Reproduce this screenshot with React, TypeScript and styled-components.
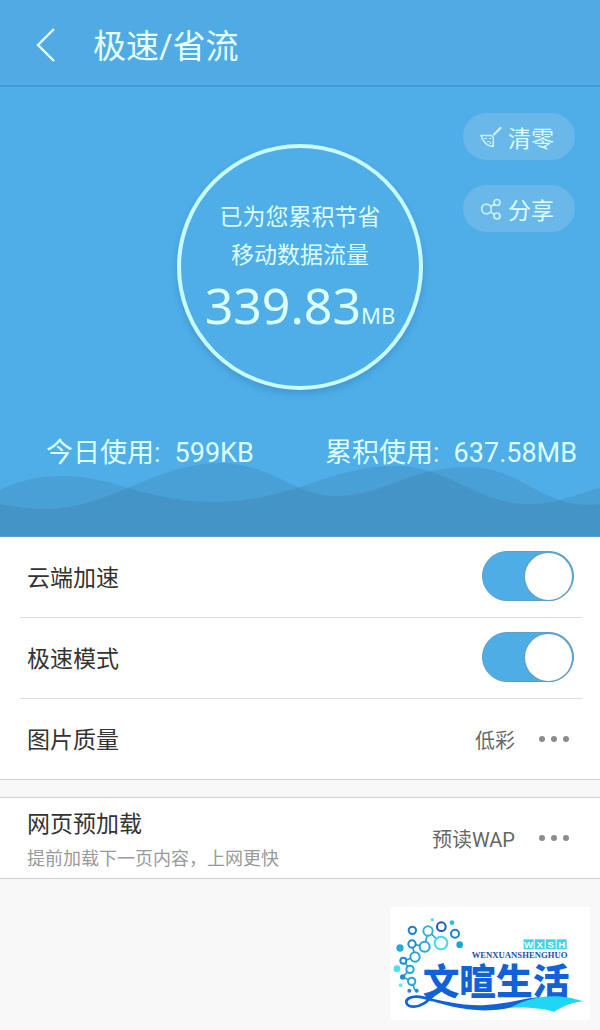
import React, { useState } from 'react';
import styled, { createGlobalStyle } from 'styled-components';

const GlobalStyle = createGlobalStyle`
  * {
    box-sizing: border-box;
  }
  body {
    margin: 0;
    background: #f8f8f8;
    color: #333;
    font-family: Roboto, 'Noto Sans CJK SC', sans-serif;
  }
  button {
    font-family: inherit;
    border: 0;
    padding: 0;
    background: none;
    color: inherit;
    cursor: pointer;
  }
`;

const BackIcon = () => (
  <svg width="20" height="36" viewBox="0 0 20 36" fill="none" stroke="currentColor" strokeWidth="2.4" aria-hidden="true">
    <path d="M18 2L2 18l16 16" />
  </svg>
);

const BroomIcon = () => (
  <svg width="22" height="22" viewBox="0 0 22 22" fill="none" stroke="currentColor" strokeWidth="1.5" opacity="0.85" aria-hidden="true">
    <path d="M20.500 2l-6.500 6.500" strokeWidth="2.200" strokeLinecap="round" />
    <path d="M1 9.500h10.500l1.800 2v9C7.500 20.500 2.500 15.500 1 9.500z" strokeLinejoin="round" />
    <path d="M4 12.500h3M9 12.500h2M7 15.500h3M10.500 18v-2" strokeWidth="1.200" />
  </svg>
);

const ShareIcon = () => (
  <svg width="22" height="22" viewBox="0 0 22 22" fill="none" stroke="currentColor" strokeWidth="1.7" opacity="0.85" aria-hidden="true">
    <circle cx="6.500" cy="11" r="4.800" />
    <circle cx="17" cy="4.500" r="3" />
    <circle cx="17" cy="18" r="3" />
    <path d="M10.500 8.600l4-2.400M10.300 13.700l4.200 2.700" />
  </svg>
);

const Waves = () => (
  <WaveSvg viewBox="0 0 600 80" preserveAspectRatio="none" aria-hidden="true">
    <path d="M0 34C20 24 40 20 62 20C115 20 145 46 215 46C290 46 330 10 395 10C450 10 475 48 530 48C560 48 580 36 600 32V80H0z" />
    <path d="M0 48C15 51 30 53 45 53C110 53 155 7 220 7C270 7 295 40 335 40C385 40 410 11 467 11C520 11 540 49 590 49L600 48V80H0z" />
  </WaveSvg>
);

const bonds =
  'M107 270L97 243L70 230L92 207L72 181L107 170L98 131L136 139L146 92L185 128';

const rings = [
  { x: 99, y: 90, r: 11, color: '#1c7fd0' },
  { x: 186, y: 79, r: 13, color: '#1558b8' },
  { x: 227, y: 100, r: 12, color: '#1c7fd0' },
  { x: 146, y: 92, r: 14, color: '#2fb4dc' },
  { x: 185, y: 128, r: 19, color: '#3fdcee' },
  { x: 136, y: 139, r: 15, color: '#27a5d8' },
  { x: 98, y: 131, r: 11, color: '#1f8cd0' },
  { x: 107, y: 170, r: 14, color: '#27a5d8' },
  { x: 72, y: 181, r: 9, color: '#1f8cd0' },
  { x: 92, y: 207, r: 11, color: '#27a5d8' },
  { x: 97, y: 243, r: 11, color: '#27a5d8' },
];

const dots = [
  { x: 159, y: 58, r: 5, color: '#52dcee' },
  { x: 218, y: 67, r: 7, color: '#27c0de' },
  { x: 241, y: 133, r: 10, color: '#1fa4d4' },
  { x: 62, y: 143, r: 11, color: '#27aadb' },
  { x: 53, y: 205, r: 10, color: '#4ae0ee' },
  { x: 70, y: 230, r: 8, color: '#1c8fd4' },
  { x: 64, y: 255, r: 6, color: '#6ce6f2' },
  { x: 90, y: 271, r: 6, color: '#1c8fd4' },
  { x: 112, y: 271, r: 6, color: '#1c8fd4' },
];

const Logo = () => (
  <LogoCard>
    <svg width="200" height="113" viewBox="32 20 600 339" role="img" aria-label="文暄生活">
      <path d={bonds} fill="none" stroke="#2a9fd8" strokeWidth="5" />
      {rings.map((c) => (
        <circle key={`${c.x}-${c.y}`} cx={c.x} cy={c.y} r={c.r} fill="#fff" stroke={c.color} strokeWidth="6" />
      ))}
      {dots.map((c) => (
        <circle key={`${c.x}-${c.y}`} cx={c.x} cy={c.y} r={c.r} fill={c.color} />
      ))}
      {['W', 'X', 'S', 'H'].map((letter, i) => (
        <g key={letter}>
          <rect x={433 + i * 33} y="117" width="30" height="30" fill="#3fd3ea" />
          <LogoTag x={448 + i * 33} y="142" textAnchor="middle">
            {letter}
          </LogoTag>
        </g>
      ))}
      <LogoLatin x="277" y="172">
        WENXUANSHENGHUO
      </LogoLatin>
      <LogoName x="130" y="283">
        文暄生活
      </LogoName>
      <path d="M176 274C152 292 134 319 104 319C80 319 74 302 90 293C106 285 134 290 160 300" fill="none" stroke="#1062d8" strokeWidth="8" />
      <path d="M128 289C190 300 250 318 320 314C390 310 430 294 482 290C440 306 400 328 330 330C250 332 190 312 128 293z" fill="#1062d8" />
      <path d="M392 322C440 296 490 286 530 288C565 289 590 297 612 303C580 306 550 318 524 335C500 325 450 320 392 322z" fill="#1fd6f4" />
    </svg>
  </LogoCard>
);

interface ISwitchRow {
  id: string;
  label: string;
}

const SwitchRow = ({ id, label }: ISwitchRow) => {
  const [on, setOn] = useState(true);
  return (
    <Row>
      <RowLabel htmlFor={id}>{label}</RowLabel>
      <Switch id={id} type="checkbox" checked={on} onChange={() => setOn(!on)} />
    </Row>
  );
};

const Option = ({ value, label }: { value: string; label: string }) => (
  <OptionButton type="button" aria-label={`${label} ${value}`}>
    {value}
    <svg width="32" height="8" viewBox="0 0 32 8" fill="#8c8c8c" aria-hidden="true">
      <circle cx="4" cy="4" r="3" />
      <circle cx="16" cy="4" r="3" />
      <circle cx="28" cy="4" r="3" />
    </svg>
  </OptionButton>
);

const App = () => {
  return (
    <>
      <GlobalStyle />
      <Header>
        <BackButton type="button" aria-label="返回">
          <BackIcon />
        </BackButton>
        <Title>极速/省流</Title>
      </Header>
      <main>
        <Hero>
          <Waves />
          <Summary>
            <Circle>
              <CircleText>已为您累积节省</CircleText>
              <CircleText>移动数据流量</CircleText>
              <Amount>
                339.83<Unit>MB</Unit>
              </Amount>
            </Circle>
            <Actions>
              <Pill type="button">
                <BroomIcon />
                清零
              </Pill>
              <Pill type="button">
                <ShareIcon />
                分享
              </Pill>
            </Actions>
          </Summary>
          <Stats>
            <Stat>
              <dt>今日使用:</dt>
              <dd>599KB</dd>
            </Stat>
            <Stat>
              <dt>累积使用:</dt>
              <dd>637.58MB</dd>
            </Stat>
          </Stats>
        </Hero>
        <Group>
          <SwitchRow id="cloud" label="云端加速" />
          <SwitchRow id="turbo" label="极速模式" />
          <Row>
            <RowTitle>图片质量</RowTitle>
            <Option label="图片质量" value="低彩" />
          </Row>
        </Group>
        <Group $spaced>
          <Row>
            <RowText>
              <RowTitle>网页预加载</RowTitle>
              <Hint>提前加载下一页内容，上网更快</Hint>
            </RowText>
            <Option label="网页预加载" value="预读WAP" />
          </Row>
        </Group>
      </main>
      <Logo />
    </>
  );
};

const Header = styled.header`
  display: flex;
  align-items: center;
  gap: 37px;
  height: 87px;
  padding: 4px 36px 0;
  background: #50abe4;
  border-bottom: 2px solid #4899cf;
  color: #e6ffff;
`;

const BackButton = styled.button`
  display: flex;
`;

const Title = styled.h1`
  margin: 0;
  padding-top: 4px;
  font-size: 33px;
  font-weight: 400;
  line-height: 48px;
`;

const Hero = styled.section`
  position: relative;
  padding: 26px 0 67px;
  background: #4fade7;
  border-bottom: 1px solid #5b9cc4;
  color: #dcffff;
`;

const WaveSvg = styled.svg`
  position: absolute;
  left: 0;
  bottom: 0;
  width: 100%;
  height: 80px;
  fill: rgba(20, 30, 60, 0.09);
`;

const Summary = styled.div`
  display: grid;
  grid-template-columns: 1fr auto 1fr;
  padding: 0 25px;
`;

const Circle = styled.div`
  grid-column: 2;
  width: 246px;
  height: 246px;
  margin-top: 31px;
  padding-top: 51px;
  border: 4px solid #c8fbff;
  border-radius: 50%;
  box-shadow: 0 4px 6px rgba(40, 110, 160, 0.3);
  text-align: center;
  white-space: nowrap;
`;

const CircleText = styled.p`
  margin: 0;
  font-size: 23px;
  line-height: 38px;
`;

const Amount = styled.p`
  margin: 0;
  font-family: 'Noto Sans', sans-serif;
  font-size: 50px;
  line-height: 60px;
`;

const Unit = styled.span`
  font-size: 22px;
`;

const Actions = styled.div`
  display: flex;
  flex-direction: column;
  align-items: flex-end;
  gap: 25px;
`;

const Pill = styled.button`
  display: flex;
  align-items: center;
  justify-content: center;
  gap: 6px;
  width: 112px;
  height: 47px;
  padding-right: 4px;
  border-radius: 24px;
  background: #69b8e9;
  font-size: 23px;
`;

const Stats = styled.dl`
  position: relative;
  display: flex;
  justify-content: space-between;
  margin: 47px 0 0;
  padding: 0 23px 0 46px;
`;

const Stat = styled.div`
  display: flex;
  gap: 14px;
  font-size: 27px;
  line-height: 32px;
  dd {
    margin: 0;
  }
`;

const Row = styled.div`
  display: flex;
  align-items: center;
  justify-content: space-between;
  height: 81px;
  margin: 0 18px 0 20px;
  padding: 0 8px 2px 7px;
  border-bottom: 1px solid #dcdcdc;
`;

const Group = styled.section<{ $spaced?: boolean }>`
  margin-top: ${({ $spaced }) => ($spaced ? 17 : 0)}px;
  background: #fff;
  border-top: ${({ $spaced }) => ($spaced ? '1px solid #d0d0d0' : '0')};
  border-bottom: 1px solid #d0d0d0;
  ${Row}:last-child {
    height: 80px;
    padding-bottom: 0;
    border-bottom: 0;
  }
`;

const RowLabel = styled.label`
  padding-top: 5px;
  font-size: 23px;
  line-height: 34px;
`;

const RowTitle = styled.div`
  padding-top: 4px;
  font-size: 23px;
  line-height: 34px;
`;

const RowText = styled.div`
  padding-top: 3px;
`;

const Hint = styled.div`
  color: #999;
  font-size: 18px;
  line-height: 34px;
`;

const Switch = styled.input`
  appearance: none;
  display: flex;
  align-items: center;
  width: 92px;
  height: 50px;
  margin: 0;
  padding: 0 1px;
  border: 1px solid #5f9fc4;
  border-radius: 25px;
  background: #bbb;
  cursor: pointer;
  &::before {
    content: '';
    width: 47px;
    height: 47px;
    border-radius: 50%;
    background: #fff;
    box-shadow: 0 0 1px 1px #5f9fc4;
  }
  &:checked {
    justify-content: flex-end;
    background: #4fade6;
  }
`;

const OptionButton = styled.button`
  display: flex;
  align-items: center;
  gap: 23px;
  padding-right: 4px;
  color: #666;
  font-size: 20px;
`;

const LogoCard = styled.aside`
  position: fixed;
  right: 10px;
  bottom: 10px;
  background: #fff;
  svg {
    display: block;
  }
`;

const LogoTag = styled.text`
  fill: #fff;
  font: 700 29px 'Liberation Sans', sans-serif;
`;

const LogoLatin = styled.text`
  fill: #1c4fa8;
  font: 700 26px 'Liberation Serif', serif;
`;

const LogoName = styled.text`
  fill: #1062d8;
  font: 900 110px 'Noto Sans CJK SC', sans-serif;
`;

export default App;
